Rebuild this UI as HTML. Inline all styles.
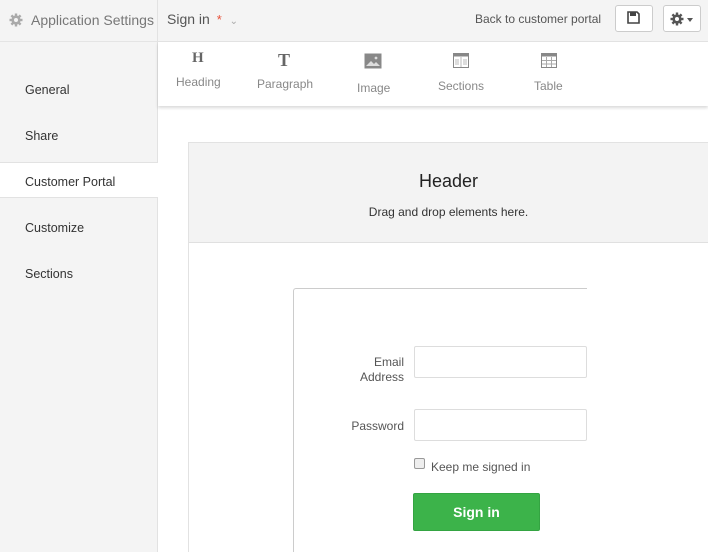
<!DOCTYPE html>
<html style="overflow:hidden;width:708px;height:552px"><head><style>
*{box-sizing:border-box;margin:0;padding:0}
html,body{width:708px;height:552px;overflow:hidden}
body{background:#fff;font-family:"Liberation Sans",Arial,sans-serif;position:relative;color:#333}
.a{position:absolute}
</style></head><body>
<div class="a" style="left:0;top:0;width:708px;height:42px;background:#f4f4f4;border-bottom:1px solid #e4e4e4"></div>
<div class="a" style="left:0;top:42px;width:158px;height:510px;background:#f4f4f4;border-right:1px solid #e2e2e2"></div>
<div class="a" style="left:157px;top:0;width:1px;height:42px;background:#e2e2e2"></div>
<svg class="a" style="left:9px;top:13px" width="14" height="14" viewBox="0 0 14 14"><g fill="#aaa"><circle cx="7" cy="7" r="4.6"/><rect x="5.8" y="0.5" width="2.4" height="13"/><rect x="0.5" y="5.8" width="13" height="2.4"/><rect x="5.8" y="0.5" width="2.4" height="13" transform="rotate(45 7 7)"/><rect x="5.8" y="0.5" width="2.4" height="13" transform="rotate(-45 7 7)"/></g><circle cx="7" cy="7" r="2" fill="#f4f4f4"/></svg>
<div class="a" style="left:31px;top:12px;font-size:14px;color:#777">Application Settings</div>
<div class="a" style="left:167px;top:11px;font-size:14px;color:#555">Sign in <span style="color:#e8513a;font-size:13px;margin-left:3px">*</span> <span style="color:#aaa;font-size:10px;margin-left:4px">&#8964;</span></div>
<div class="a" style="left:475px;top:12px;font-size:12px;color:#555">Back to customer portal</div>
<div class="a" style="left:615px;top:5px;width:38px;height:27px;border:1px solid #ccc;border-radius:3px;background:#fff"></div>
<svg class="a" style="left:627px;top:11px" width="13" height="13" viewBox="0 0 13 13"><path d="M1 1h9l2 2v9H1z" fill="none" stroke="#444" stroke-width="1.6"/><rect x="3" y="1" width="6" height="4" fill="#444"/></svg>
<div class="a" style="left:663px;top:5px;width:38px;height:27px;border:1px solid #ccc;border-radius:3px;background:#fff"></div>
<svg class="a" style="left:670px;top:12px" width="14" height="14" viewBox="0 0 14 14"><g fill="#555"><circle cx="7" cy="7" r="4.6"/><rect x="5.8" y="0.5" width="2.4" height="13"/><rect x="0.5" y="5.8" width="13" height="2.4"/><rect x="5.8" y="0.5" width="2.4" height="13" transform="rotate(45 7 7)"/><rect x="5.8" y="0.5" width="2.4" height="13" transform="rotate(-45 7 7)"/></g><circle cx="7" cy="7" r="2" fill="#fff"/></svg>
<div class="a" style="left:687px;top:18px;border-left:3px solid transparent;border-right:3px solid transparent;border-top:4px solid #555"></div>

<div class="a" style="left:158px;top:42px;width:550px;height:64px;background:#fff;box-shadow:0 2px 3px rgba(0,0,0,.15)"></div>
<div class="a" style="left:192px;top:50px;font-family:'Liberation Serif',serif;font-weight:bold;font-size:15px;color:#666">H</div>
<div class="a" style="left:176px;top:75px;font-size:12px;color:#888">Heading</div>
<div class="a" style="left:278px;top:50px;font-family:'Liberation Serif',serif;font-weight:bold;font-size:18px;color:#666">T</div>
<div class="a" style="left:257px;top:77px;font-size:12px;color:#888">Paragraph</div>
<svg class="a" style="left:364px;top:53px" width="18" height="16"><rect x="0.5" y="0.5" width="17" height="15" fill="#888"/><path d="M2 13l5-5 3 3 2-2 4 4z" fill="#ddd"/><circle cx="12" cy="5" r="1.4" fill="#ddd"/></svg>
<div class="a" style="left:357px;top:81px;font-size:12px;color:#888">Image</div>
<svg class="a" style="left:453px;top:53px" width="16" height="15"><rect x="0.5" y="0.5" width="15" height="14" fill="none" stroke="#888"/><rect x="0.5" y="0.5" width="15" height="3" fill="#888"/><path d="M8 4v10M3 6v6M5 6v6M11 6v6M13 6v6" stroke="#bbb"/></svg>
<div class="a" style="left:438px;top:79px;font-size:12px;color:#888">Sections</div>
<svg class="a" style="left:541px;top:53px" width="16" height="15"><rect x="0.5" y="0.5" width="15" height="14" fill="none" stroke="#888"/><rect x="0.5" y="0.5" width="15" height="3" fill="#888"/><path d="M1 7.5h14M1 11h14M5.5 4v10M10.5 4v10" stroke="#aaa"/></svg>
<div class="a" style="left:534px;top:79px;font-size:12px;color:#888">Table</div>

<div class="a" style="left:25px;top:83px;font-size:12.5px;color:#333">General</div>
<div class="a" style="left:25px;top:129px;font-size:12.5px;color:#333">Share</div>
<div class="a" style="left:0;top:162px;width:158px;height:36px;background:#fff;border-top:1px solid #e2e2e2;border-bottom:1px solid #e2e2e2"></div>
<div class="a" style="left:25px;top:175px;font-size:12.5px;color:#333">Customer Portal</div>
<div class="a" style="left:25px;top:221px;font-size:12.5px;color:#333">Customize</div>
<div class="a" style="left:25px;top:267px;font-size:12.5px;color:#333">Sections</div>

<div class="a" style="left:188px;top:142px;width:520px;height:410px;border:1px solid #e2e2e2;border-right:none;border-bottom:none;background:#fff"></div>
<div class="a" style="left:189px;top:143px;width:519px;height:100px;background:#f3f3f3;border-bottom:1px solid #e0e0e0"></div>
<div class="a" style="left:189px;top:171px;width:519px;text-align:center;font-size:18px;color:#222">Header</div>
<div class="a" style="left:189px;top:205px;width:519px;text-align:center;font-size:12px;color:#333">Drag and drop elements here.</div>

<div class="a" style="left:293px;top:288px;width:294px;height:264px;border:1px solid #ccc;border-right:none;border-bottom:none;border-radius:3px 0 0 0"></div>
<div class="a" style="left:330px;top:355px;width:74px;text-align:right;font-size:12px;color:#555;line-height:15px">Email<br>Address</div>
<div class="a" style="left:414px;top:346px;width:173px;height:32px;border:1px solid #ddd;border-radius:2px"></div>
<div class="a" style="left:330px;top:419px;width:74px;text-align:right;font-size:12px;color:#555">Password</div>
<div class="a" style="left:414px;top:409px;width:173px;height:32px;border:1px solid #ddd;border-radius:2px"></div>
<div class="a" style="left:414px;top:458px;width:11px;height:11px;border:1px solid #999;border-radius:2px;background:#eee"></div>
<div class="a" style="left:431px;top:460px;font-size:12px;color:#555">Keep me signed in</div>
<div class="a" style="left:413px;top:493px;width:127px;height:38px;background:#3cb34a;border:1px solid #34a442;border-radius:2px;color:#fff;font-weight:bold;font-size:14px;text-align:center;line-height:36px">Sign in</div>
</body></html>
